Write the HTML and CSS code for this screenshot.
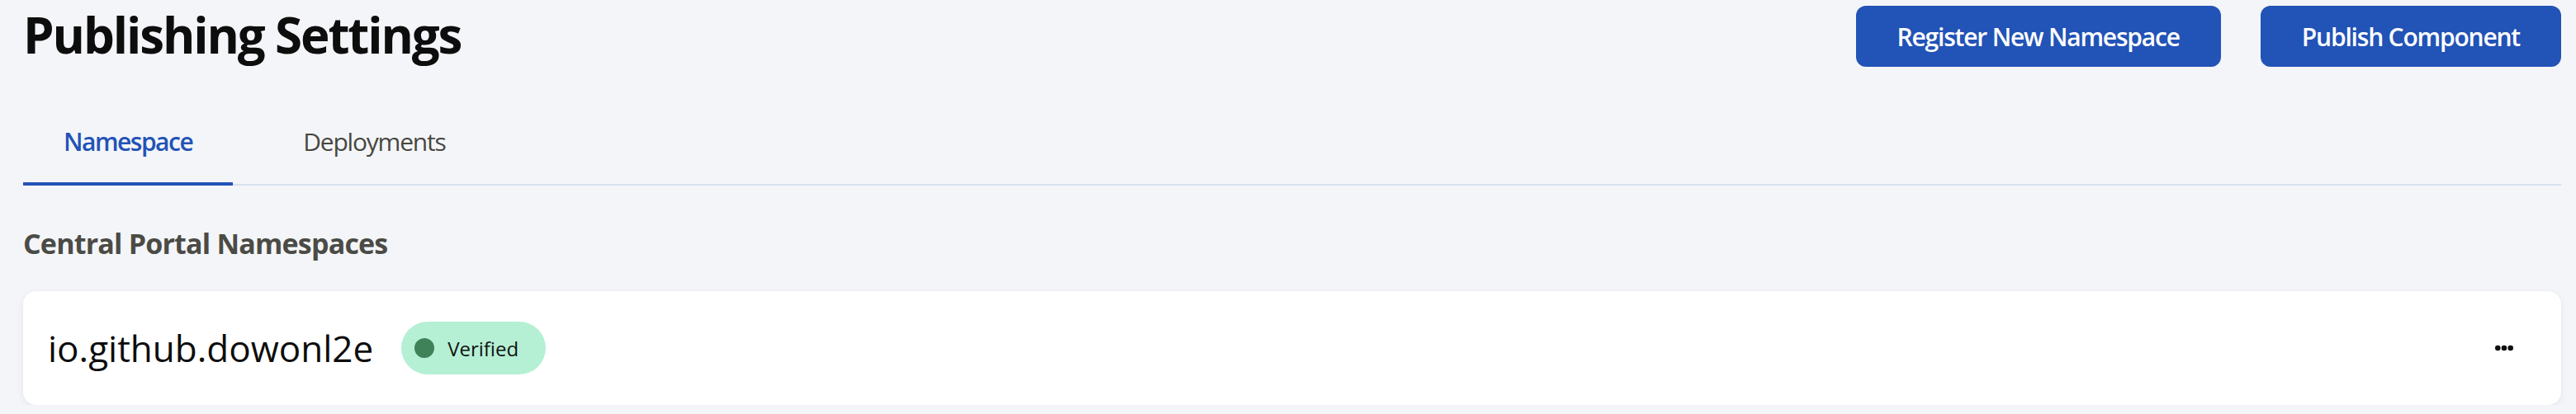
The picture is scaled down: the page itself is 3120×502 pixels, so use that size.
FILE: index.html
```html
<!DOCTYPE html>
<html>
<head>
  <title>Publishing Settings</title>
  <link rel="stylesheet" href="styles.css">
</head>
<body>
  <div class="page">
    <div class="header">
      <h1>Publishing Settings</h1>
      <div class="actions">
        <button class="btn">Register New Namespace</button>
        <button class="btn">Publish Component</button>
      </div>
    </div>
    <div class="tabs">
      <div class="tab active">Namespace</div>
      <div class="tab">Deployments</div>
    </div>
    <h2 class="section-title">Central Portal Namespaces</h2>
    <div class="card">
      <div class="card-main">
        <span class="ns-name">io.github.dowonl2e</span>
        <span class="badge"><span class="dot"></span>Verified</span>
      </div>
      <button class="more" aria-label="More">
        <svg width="22" height="8" viewBox="0 0 22 8">
          <circle cx="3.3" cy="4" r="3.3" fill="#111"/>
          <circle cx="11" cy="4" r="3.3" fill="#111"/>
          <circle cx="18.7" cy="4" r="3.3" fill="#111"/>
        </svg>
      </button>
    </div>
  </div>
</body>
</html>
```

FILE: styles.css
```css
html, body {
  margin: 0;
  padding: 0;
  background-color: #f4f5f9;
  font-family: "Open Sans", "Liberation Sans", sans-serif;
}
.page {
  padding: 0 18px 0 28px;
}
.header {
  display: flex;
  justify-content: space-between;
  align-items: flex-start;
}
h1 {
  margin: 0;
  padding-top: 1px;
  font-size: 60px;
  font-weight: 700;
  letter-spacing: -2.1px;
  color: #0d0d0d;
  line-height: normal;
}
.actions {
  display: flex;
  gap: 48px;
  margin-top: 7px;
}
.btn {
  height: 74px;
  padding: 0 50px;
  border: none;
  border-radius: 12px;
  background-color: #2253b6;
  color: #fff;
  font-family: inherit;
  font-size: 30px;
  font-weight: 600;
  letter-spacing: -1.2px;
}
.tabs {
  display: flex;
  gap: 36px;
  margin-top: 39px;
  border-bottom: 2px solid #d9e0ef;
}
.tab {
  padding: 29px 49px 29px;
  margin-bottom: -2px;
  font-size: 30px;
  font-weight: 400;
  letter-spacing: -1.2px;
  color: #47473f;
  border-bottom: 4px solid transparent;
}
.tab.active {
  font-weight: 600;
  letter-spacing: -1.5px;
  color: #2253b6;
  border-bottom-color: #2253b6;
}
.section-title {
  margin: 47px 0 35px;
  font-size: 34px;
  font-weight: 700;
  letter-spacing: -0.8px;
  color: #4b4b45;
  line-height: normal;
}
.card {
  display: flex;
  align-items: center;
  justify-content: space-between;
  height: 138px;
  padding: 0 54px 0 30px;
  background-color: #fff;
  border-radius: 16px;
  box-shadow: 0 2px 8px rgba(20, 30, 60, 0.07);
}
.card-main {
  display: flex;
  align-items: center;
  gap: 34px;
}
.ns-name {
  font-size: 44px;
  color: #0d0d0d;
}
.badge {
  display: flex;
  align-items: center;
  gap: 16px;
  height: 64px;
  padding: 0 33px 0 16px;
  border-radius: 32px;
  background-color: #b5f0d5;
  font-size: 24px;
  color: #111;
}
.dot {
  width: 24px;
  height: 24px;
  border-radius: 50%;
  background-color: #3f8159;
}
.more {
  display: flex;
  padding: 4px;
  border: none;
  background: none;
}
```
